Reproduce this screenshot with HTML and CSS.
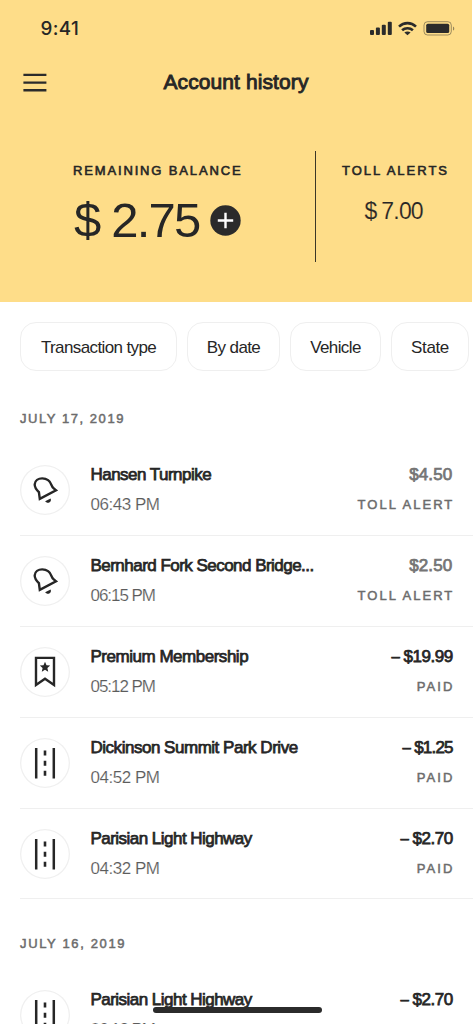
FILE: index.html
```html
<!DOCTYPE html>
<html lang="en">
<head>
<meta charset="utf-8">
<title>Account history</title>
<link rel="stylesheet" href="styles.css">
</head>
<body>
<svg width="0" height="0" class="defs">
  <symbol id="bell" viewBox="0 0 50 50">
    <path d="M19.8 33.9L18.9 27.2C16.4 24.8 14.6 22.6 14.7 19.4C14.9 15.6 18.4 13.4 22.2 13.4C27.2 13.5 30.2 16.2 31.4 19.8C32 21.6 32.8 22.6 34 23.6L36 25.2Z" fill="none" stroke="#262626" stroke-width="2.4"/>
    <path d="M25.2 36.3L30.6 33.5C31.4 35.3 30.7 36.9 29.3 37.5C27.8 38.1 26.1 37.7 25.2 36.3Z" fill="#262626"/>
  </symbol>
  <symbol id="bookmark" viewBox="0 0 50 50">
    <path d="M16 10.9H34V38L25 31.7L16 38Z" fill="none" stroke="#262626" stroke-width="2.4"/>
    <path d="M25 14.7L26.5 18.2L30.2 18.5L27.4 21L28.2 24.7L25 22.7L21.8 24.7L22.6 21L19.8 18.5L23.5 18.2Z" fill="#262626"/>
  </symbol>
  <symbol id="road" viewBox="0 0 50 50">
    <path d="M16.2 10V40.5M33.8 10V40.5" stroke="#262626" stroke-width="2.5"/>
    <path d="M25 12.5V17.5M25 22.7V27.7M25 32.8V37.8" stroke="#262626" stroke-width="2.6"/>
  </symbol>
</svg>
<div class="screen">
  <header class="hero">
    <div class="status-bar">
      <span class="clock">9:41</span>
      <svg class="indicators" width="86" height="16" viewBox="0 0 86 16">
        <g fill="#2b2b2b">
          <rect x="0" y="9" width="4" height="5" rx="1"/>
          <rect x="5.9" y="6.5" width="4" height="7.5" rx="1"/>
          <rect x="11.8" y="3.8" width="4" height="10.2" rx="1"/>
          <rect x="17.8" y="0.8" width="4" height="13.2" rx="1"/>
          <path d="M37.5 14.3L34.4 11.5C36 10 39 10 40.6 11.5Z"/>
          <rect x="56.2" y="2.7" width="23" height="9.3" rx="1.6"/>
          <path d="M83 5.4C84.7 6 84.7 9 83 9.6Z" opacity=".5"/>
        </g>
        <g fill="none" stroke="#2b2b2b" stroke-width="2.6">
          <path d="M32.1 9.3C35 6.6 40 6.6 42.9 9.3"/>
          <path d="M29 5.6C33.8 1 41.2 1 46 5.6"/>
        </g>
        <rect x="54" y=".7" width="27.3" height="13.3" rx="3.5" fill="none" stroke="#2b2b2b" stroke-opacity=".45"/>
      </svg>
    </div>
    <div class="nav">
      <svg class="menu" width="24" height="20" viewBox="0 0 24 20"><path d="M.4 1.9H23.4M.4 9.6H23.4M.4 17.3H23.4" stroke="#2b2b2b" stroke-width="2.4"/></svg>
      <h1 class="title">Account history</h1>
    </div>
    <div class="summary">
      <section class="balance">
        <h2 class="label">REMAINING BALANCE</h2>
        <div class="balance-line">
          <span class="balance-value">$ 2.75</span>
          <svg class="add" width="31" height="31" viewBox="0 0 31 31"><circle cx="15.5" cy="15.5" r="15.2" fill="#2b2b2b"/><path d="M7.8 15.5H23.2M15.5 7.8V23.2" stroke="#fff" stroke-width="2.4"/></svg>
        </div>
      </section>
      <section class="alerts">
        <h2 class="label">TOLL ALERTS</h2>
        <div class="alerts-value"><span class="currency">$</span>7.00</div>
      </section>
    </div>
  </header>
  <nav class="filters">
    <span class="chip chip-type">Transaction type</span>
    <span class="chip chip-date">By date</span>
    <span class="chip chip-vehicle">Vehicle</span>
    <span class="chip chip-state">State</span>
  </nav>
  <main class="history">
    <h3 class="day">JULY 17, 2019</h3>
    <article class="row">
      <svg class="icon"><use href="#bell"/></svg>
      <div class="info"><div class="name">Hansen Turnpike</div><div class="time">06:43 PM</div></div>
      <div class="result"><div class="amount pending">$4.50</div><div class="state">TOLL ALERT</div></div>
    </article>
    <article class="row">
      <svg class="icon"><use href="#bell"/></svg>
      <div class="info"><div class="name">Bernhard Fork Second Bridge...</div><div class="time narrow">06:15 PM</div></div>
      <div class="result"><div class="amount pending">$2.50</div><div class="state">TOLL ALERT</div></div>
    </article>
    <article class="row">
      <svg class="icon"><use href="#bookmark"/></svg>
      <div class="info"><div class="name wide">Premium Membership</div><div class="time narrow">05:12 PM</div></div>
      <div class="result"><div class="amount"><span class="minus">–</span>$19.99</div><div class="state">PAID</div></div>
    </article>
    <article class="row">
      <svg class="icon"><use href="#road"/></svg>
      <div class="info"><div class="name wide">Dickinson Summit Park Drive</div><div class="time">04:52 PM</div></div>
      <div class="result"><div class="amount narrow"><span class="minus">–</span>$1.25</div><div class="state">PAID</div></div>
    </article>
    <article class="row">
      <svg class="icon"><use href="#road"/></svg>
      <div class="info"><div class="name">Parisian Light Highway</div><div class="time">04:32 PM</div></div>
      <div class="result"><div class="amount"><span class="minus">–</span>$2.70</div><div class="state">PAID</div></div>
    </article>
    <h3 class="day">JULY 16, 2019</h3>
    <article class="row">
      <svg class="icon"><use href="#road"/></svg>
      <div class="info"><div class="name">Parisian Light Highway</div><div class="time narrow">06:12 PM</div></div>
      <div class="result"><div class="amount"><span class="minus">–</span>$2.70</div></div>
    </article>
  </main>
  <div class="home-indicator"></div>
</div>
</body>
</html>
```
FILE: styles.css
```css
* { box-sizing: border-box; }
body { margin: 0; background: #fff; font-family: "Liberation Sans", Arial, sans-serif; color: #262626; }
h1, h2, h3 { margin: 0; font-weight: 400; }
.defs { position: absolute; }
.screen { position: relative; width: 473px; height: 1024px; overflow: hidden; background: #fff; white-space: nowrap; }

.hero { width: 472px; height: 302px; background: #fedd89; }
.status-bar { display: flex; justify-content: space-between; padding: 18px 16px 0 40.5px; height: 60px; }
.clock { font: 500 18.8px/22px Inter, sans-serif; letter-spacing: .35px; }
.indicators { margin-top: 3px; }
.nav { display: grid; grid-template-columns: 48px 1fr 48px; align-items: center; height: 44px; }
.menu { margin-left: 23px; margin-top: 2px; }
.title { font-size: 21px; line-height: 24px; text-align: center; -webkit-text-stroke: .9px #262626; letter-spacing: .1px; }
.summary { display: grid; grid-template-columns: 316px 156px; margin-top: 47px; height: 111px; }
.label { font-size: 13px; line-height: 16px; letter-spacing: 1.85px; margin-right: -1.85px; -webkit-text-stroke: .6px #262626; }
.alerts .label { letter-spacing: 2px; }
.balance { border-right: 1.5px solid #3b3627; padding: 12px 0 0 73px; }
.balance-line { display: flex; align-items: center; margin-top: 13px; gap: 11px; padding-left: 1px; }
.balance-value { font-size: 49px; line-height: 56px; letter-spacing: -1.8px; }
.alerts { padding: 12px 0 0 26px; }
.alerts-value { margin: 19px 0 0 22.5px; font-size: 23px; line-height: 26px; letter-spacing: -.8px; -webkit-text-stroke: .15px #fedd89; }
.currency { margin-right: 4.8px; }

.filters { display: flex; gap: 10px; padding: 20px 0 0 20px; }
.chip { flex: none; height: 49px; border: 1.5px solid #efefef; border-radius: 16px; font-size: 17px; line-height: 49px; text-align: center; letter-spacing: -.62px; }
.chip-type { width: 157px; }
.chip-date { width: 93px; letter-spacing: -.6px; }
.chip-vehicle { width: 91px; }
.chip-state { width: 78px; letter-spacing: -.35px; }

.history { padding-left: 20px; }
.day { padding-top: 40px; height: 74px; font-size: 13px; line-height: 16px; letter-spacing: 1.55px; color: #6c6c6c; -webkit-text-stroke: .5px #6c6c6c; }
.row + .day { padding-top: 37px; height: 71px; letter-spacing: 1.65px; }
.row { display: grid; grid-template-columns: 50px 1fr auto; column-gap: 20.5px; align-items: center; height: 90.9px; padding-right: 20.7px; border-bottom: 1.5px solid #efefef; }
.icon { width: 50px; height: 50px; box-shadow: inset 0 0 0 1.3px #f0f0f0; border-radius: 50%; }
.info, .result { display: grid; grid-template-rows: 20px 20px; row-gap: 10px; line-height: 20px; font-size: 17px; }
.name { letter-spacing: -.53px; -webkit-text-stroke: .75px #262626; }
.name.wide { letter-spacing: -.48px; }
.time { letter-spacing: -.48px; color: #5c5c5c; -webkit-text-stroke: .15px #fff; }
.time.narrow { letter-spacing: -1.05px; }
.result { text-align: right; }
.amount { letter-spacing: -.45px; margin-right: -.45px; -webkit-text-stroke: .75px #262626; }
.amount.narrow { letter-spacing: -.8px; margin-right: -.4px; }
.amount.pending { color: #757575; -webkit-text-stroke-color: #757575; letter-spacing: .1px; margin-right: 0; }
.minus { display: inline-block; transform: scaleX(.88); margin-right: 3.6px; }
.state { font-size: 13px; letter-spacing: 2.05px; margin-right: -2.05px; color: #6c6c6c; -webkit-text-stroke: .5px #6c6c6c; }
.home-indicator { position: absolute; left: 152.5px; top: 1006.7px; width: 169px; height: 6.4px; border-radius: 4px; background: #2b2b2b; }
```
